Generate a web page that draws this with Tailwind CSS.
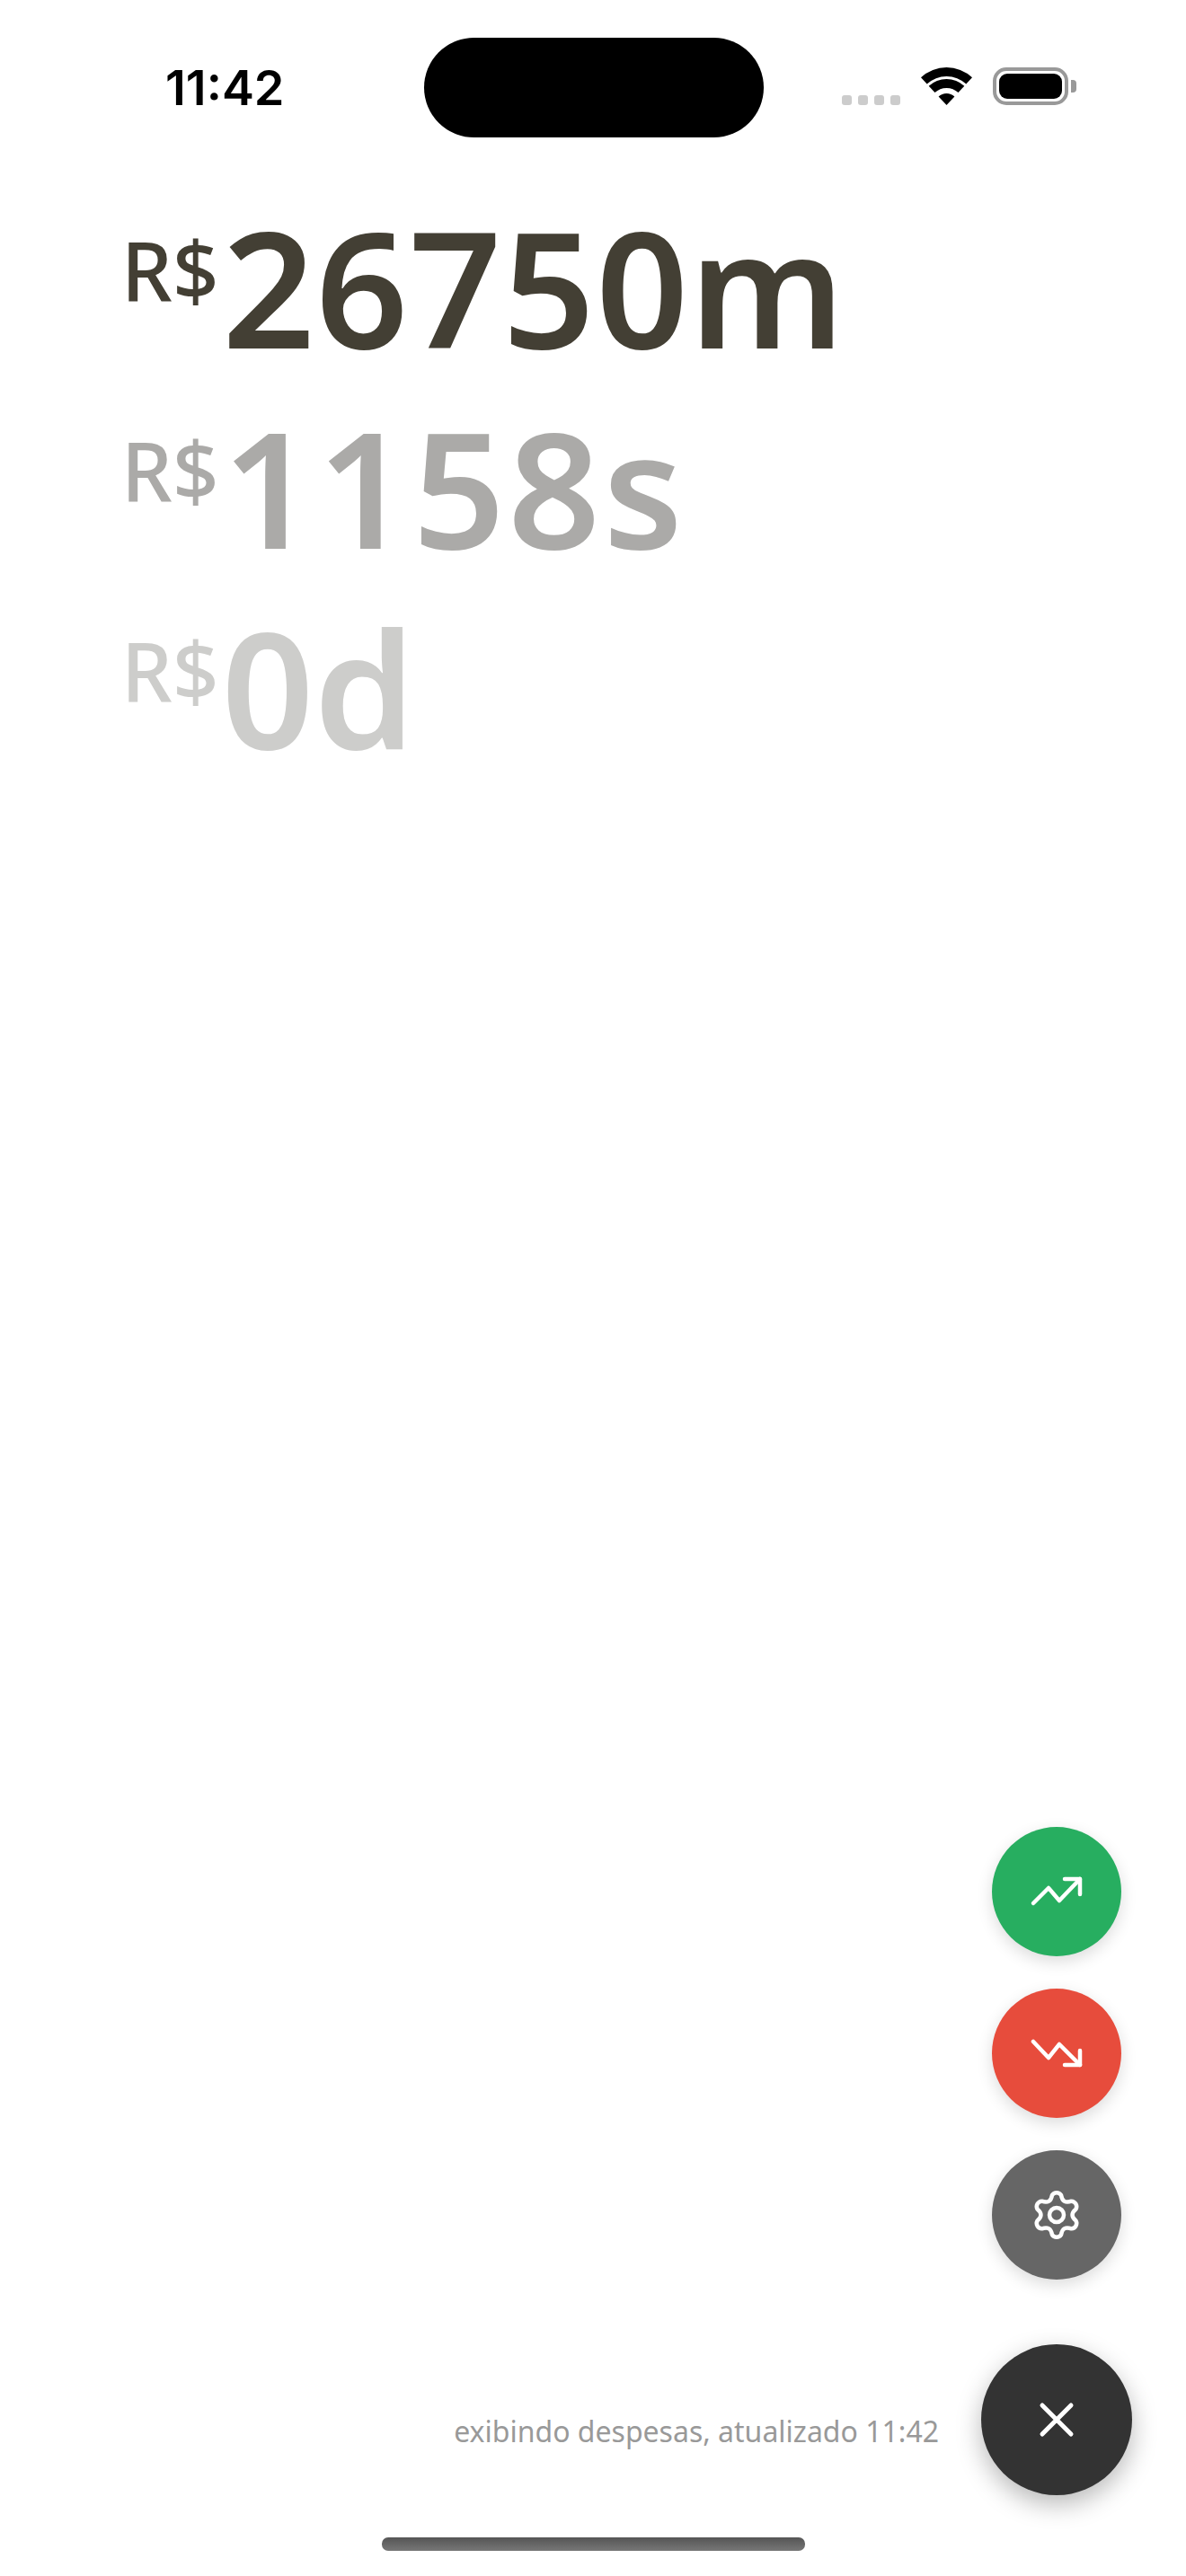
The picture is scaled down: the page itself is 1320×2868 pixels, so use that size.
<!DOCTYPE html>
<html lang="pt-BR">
<head>
  <meta charset="UTF-8">
  <title>Despesas</title>
  <script src="https://cdn.jsdelivr.net/npm/@tailwindcss/browser@4"></script>
</head>
<body class="bg-white">
  <div class="w-[1320px] h-[2868px] flex flex-col overflow-hidden font-['Noto_Sans',sans-serif]">

    <!-- Status bar -->
    <header class="h-[160px] shrink-0 flex items-start">
      <span class="w-[472px] pl-[184px] pt-[64px] text-[54px] leading-[68px] font-semibold text-black font-['Inter',sans-serif]">11:42</span>
      <div class="w-[378px] h-[111px] mt-[42px] rounded-[56px] bg-black"></div>
      <div class="flex items-start">
        <div class="flex gap-[7px] ml-[87px] mt-[106px]">
          <span class="w-[11px] h-[11px] rounded-[3px] bg-[#ccc]"></span>
          <span class="w-[11px] h-[11px] rounded-[3px] bg-[#ccc]"></span>
          <span class="w-[11px] h-[11px] rounded-[3px] bg-[#ccc]"></span>
          <span class="w-[11px] h-[11px] rounded-[3px] bg-[#ccc]"></span>
        </div>
        <svg class="ml-[23px] mt-[75px]" width="57" height="42" viewBox="0 0 57 42" fill="#000">
          <path d="M0 11.2A42 42 0 0 1 57 11.2L50.3 18.6A32 32 0 0 0 6.7 18.6Z"/>
          <path d="M8.7 20.8A29 29 0 0 1 48.3 20.8L41.5 28.1A19 19 0 0 0 15.5 28.1Z"/>
          <path d="M19.6 32.5A13 13 0 0 1 37.4 32.5L28.5 42Z"/>
        </svg>
        <div class="ml-[23px] mt-[75px] flex items-center">
          <div class="w-[84px] h-[42px] p-[3px] rounded-[15px] border-[4px] border-[#999]">
            <div class="w-full h-full rounded-[9px] bg-black"></div>
          </div>
          <div class="w-[6px] h-[14px] ml-[3px] rounded-r-[4px] bg-[#999]"></div>
        </div>
      </div>
    </header>

    <!-- Totals -->
    <main class="grow pl-[135px] pt-[36px]">
      <div class="flex items-start h-[223px] text-[#433f34]">
        <span class="mt-[54px] mr-[4px] text-[90px] leading-[100px] font-medium">R$</span>
        <span class="text-[180px] leading-[246px] font-[650] tracking-[1px]">26750m</span>
      </div>
      <div class="flex items-start h-[223px] text-[#abaaa8]">
        <span class="mt-[54px] mr-[4px] text-[90px] leading-[100px] font-medium">R$</span>
        <span class="text-[180px] leading-[246px] font-[650] tracking-[3px]">1158s</span>
      </div>
      <div class="flex items-start h-[223px] text-[#cdcdcb]">
        <span class="mt-[54px] mr-[3px] text-[90px] leading-[100px] font-medium">R$</span>
        <span class="text-[180px] leading-[246px] font-[650]">0d</span>
      </div>
    </main>

    <!-- Action buttons -->
    <section class="shrink-0 flex flex-col items-end pr-[60px]">
      <div class="flex flex-col gap-[36px] mr-[12px]">
        <button class="w-[144px] h-[144px] rounded-full bg-[#27ae60] shadow-[0_6px_18px_rgba(0,0,0,0.14)] flex items-center justify-center">
          <svg width="72" height="72" viewBox="0 0 72 72" fill="none" stroke="#fff" stroke-width="4.5" stroke-linecap="round" stroke-linejoin="round">
            <path d="M10 49L27 32L39 46L62 22"/>
            <path d="M45 22H62V39"/>
          </svg>
        </button>
        <button class="w-[144px] h-[144px] rounded-full bg-[#e74c3c] shadow-[0_6px_18px_rgba(0,0,0,0.14)] flex items-center justify-center">
          <svg width="72" height="72" viewBox="0 0 72 72" fill="none" stroke="#fff" stroke-width="4.5" stroke-linecap="round" stroke-linejoin="round">
            <path d="M10 23L27 41L39 26L62 49"/>
            <path d="M45 49H62V33"/>
          </svg>
        </button>
        <button class="w-[144px] h-[144px] rounded-full bg-[#666] shadow-[0_6px_18px_rgba(0,0,0,0.14)] flex items-center justify-center">
          <svg width="72" height="72" viewBox="0 0 72 72" fill="none" stroke="#fff" stroke-width="4.5" stroke-linecap="round" stroke-linejoin="round">
            <path d="M30.94 14.08A6 6 0 0 1 41.06 14.08Q42.75 24.31 52.46 20.66A6 6 0 0 1 57.52 29.42Q49.5 36 57.52 42.58A6 6 0 0 1 52.46 51.34Q42.75 47.69 41.06 57.92A6 6 0 0 1 30.94 57.92Q29.25 47.69 19.54 51.34A6 6 0 0 1 14.48 42.58Q22.5 36 14.48 29.42A6 6 0 0 1 19.54 20.66Q29.25 24.31 30.94 14.08Z"/>
            <circle cx="36" cy="36" r="8"/>
          </svg>
        </button>
      </div>
      <div class="flex items-start mt-[72px]">
        <span class="mt-[75px] mr-[47px] text-[32px] leading-[44px] text-[#999]">exibindo despesas, atualizado 11:42</span>
        <button class="w-[168px] h-[168px] rounded-full bg-[#333] shadow-[0_10px_28px_rgba(0,0,0,0.28)] flex items-center justify-center">
          <svg width="72" height="72" viewBox="0 0 72 72" fill="none" stroke="#fff" stroke-width="5" stroke-linecap="round">
            <path d="M20 20L52 52M52 20L20 52"/>
          </svg>
        </button>
      </div>
    </section>

    <!-- Home indicator -->
    <footer class="shrink-0 h-[90px] pt-[47px] flex justify-center">
      <div class="w-[471px] h-[15px] rounded-[7px] bg-gradient-to-b from-[#555] to-[#777]"></div>
    </footer>
  </div>
</body>
</html>
